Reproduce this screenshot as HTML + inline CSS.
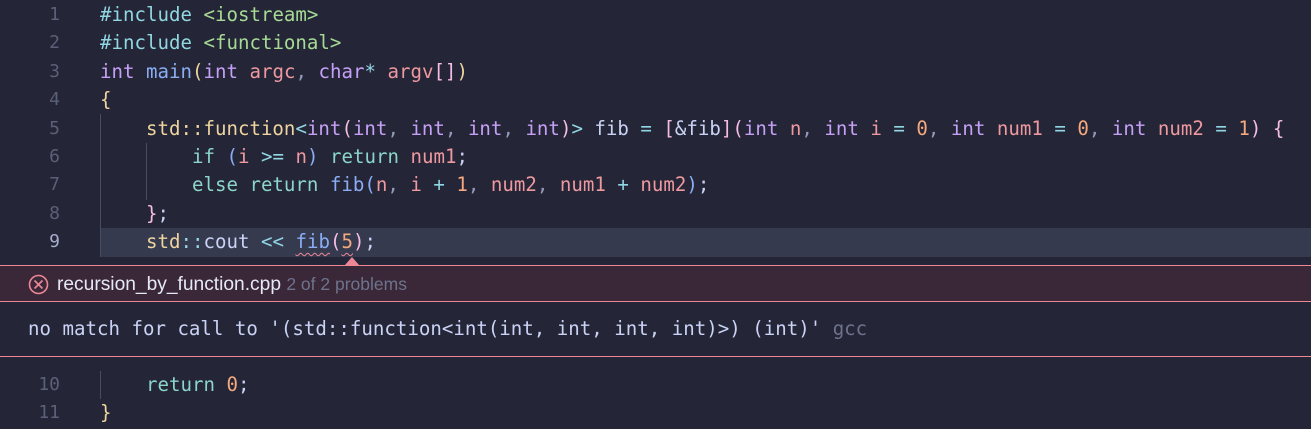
<!DOCTYPE html>
<html><head><meta charset="utf-8"><style>
body{margin:0;width:1311px;height:429px;background:#242536;overflow:hidden;position:relative;font-family:"DejaVu Sans Mono","Liberation Mono",monospace;}
.l{position:absolute;left:0;width:1311px;height:28.4px;line-height:28.4px;font-size:19.1px;white-space:pre;color:#cad3f5}
.n{position:absolute;left:0;width:60px;text-align:right;color:#5b6078;font-size:18px}
.c{position:absolute;left:100px}
.k{color:#c6a0f6}.s{color:#91d7e3}.g{color:#a6da95}.b{color:#8aadf4}.y{color:#eed49f}.m{color:#ee99a0}.p{color:#f5bde6}.o{color:#f5a97f}.w{color:#939ab7}.t{color:#8bd5ca}
.guide{position:absolute;width:1px;background:#494d64}
.sq{text-decoration:underline wavy #ed8796;text-underline-offset:4px;text-decoration-thickness:1px}
</style></head><body>
<div class="l" style="top:1px"><span class="n">1</span><span class="c"><span class="s">#include</span> <span class="g">&lt;iostream&gt;</span></span></div>
<div class="l" style="top:29.4px"><span class="n">2</span><span class="c"><span class="s">#include</span> <span class="g">&lt;functional&gt;</span></span></div>
<div class="l" style="top:57.8px"><span class="n">3</span><span class="c"><span class="k">int</span> <span class="b">main</span><span class="y">(</span><span class="k">int</span> <span class="m">argc</span><span class="w">,</span> <span class="k">char</span><span class="s">*</span> <span class="m">argv</span><span class="p">[]</span><span class="y">)</span></span></div>
<div class="l" style="top:86.2px"><span class="n">4</span><span class="c"><span class="y">{</span></span></div>
<div class="l" style="top:114.6px"><span class="n">5</span><span class="c">    <span class="y">std::function</span><span class="s">&lt;</span><span class="k">int</span><span class="p">(</span><span class="k">int</span><span class="w">,</span> <span class="k">int</span><span class="w">,</span> <span class="k">int</span><span class="w">,</span> <span class="k">int</span><span class="p">)</span><span class="s">&gt;</span> fib <span class="s">=</span> <span class="p">[</span>&amp;fib<span class="p">](</span><span class="k">int</span> <span class="m">n</span><span class="w">,</span> <span class="k">int</span> <span class="m">i</span> <span class="s">=</span> <span class="o">0</span><span class="w">,</span> <span class="k">int</span> <span class="m">num1</span> <span class="s">=</span> <span class="o">0</span><span class="w">,</span> <span class="k">int</span> <span class="m">num2</span> <span class="s">=</span> <span class="o">1</span><span class="p">)</span> <span class="p">{</span></span></div>
<div class="l" style="top:143px"><span class="n">6</span><span class="c">        <span class="t">if</span> <span class="b">(</span><span class="m">i</span> <span class="s">&gt;=</span> <span class="m">n</span><span class="b">)</span> <span class="t">return</span> <span class="m">num1</span>;</span></div>
<div class="l" style="top:171.4px"><span class="n">7</span><span class="c">        <span class="t">else return</span> <span class="b">fib(</span><span class="m">n</span><span class="w">,</span> <span class="m">i</span> <span class="s">+</span> <span class="o">1</span><span class="w">,</span> <span class="m">num2</span><span class="w">,</span> <span class="m">num1</span> <span class="s">+</span> <span class="m">num2</span><span class="b">)</span>;</span></div>
<div class="l" style="top:199.8px"><span class="n">8</span><span class="c">    <span class="p">}</span>;</span></div>
<div style="position:absolute;left:100px;top:228.2px;width:1211px;height:28.4px;background:#363a4f"></div>
<div class="l" style="top:228.2px"><span class="n" style="color:#a5adcb">9</span><span class="c">    <span class="y">std</span><span class="s">::</span>cout <span class="s">&lt;&lt;</span> <span class="b sq">fib</span><span class="p">(</span><span class="o sq">5</span><span class="p">)</span>;</span></div>
<div class="guide" style="left:100px;top:114px;height:143px"></div>
<div class="guide" style="left:146px;top:143px;height:57px"></div>
<div style="position:absolute;left:345px;top:257px;width:0;height:0;border-left:7px solid transparent;border-right:7px solid transparent;border-bottom:8px solid #ed8796"></div>
<div style="position:absolute;left:0;top:265px;width:1311px;height:35px;background:#3a2838;border-top:1px solid #ed8796;border-bottom:1px solid #ed8796"></div>
<svg style="position:absolute;left:28px;top:274px" width="21" height="21" viewBox="0 0 21 21"><circle cx="10.5" cy="10.5" r="9" fill="none" stroke="#ed8796" stroke-width="1.6"/><path d="M6.5 6.5L14.5 14.5M14.5 6.5L6.5 14.5" stroke="#ed8796" stroke-width="1.6"/></svg>
<div style="position:absolute;left:57px;top:272px;font-family:'Liberation Sans',sans-serif;font-size:19.2px;color:#e6e9f5;line-height:24px">recursion_by_function.cpp <span style="color:#6e738d;font-size:17.5px">2 of 2 problems</span></div>
<div style="position:absolute;left:28px;top:315px;font-size:19.1px;color:#cad3f5;white-space:pre;line-height:28px">no match for call to '(std::function&lt;int(int, int, int, int)&gt;) (int)' <span style="color:#6e738d">gcc</span></div>
<div style="position:absolute;left:0;top:356px;width:1311px;height:1px;background:#ed8796"></div>
<div class="l" style="top:371px"><span class="n">10</span><span class="c">    <span class="t">return</span> <span class="o">0</span>;</span></div>
<div class="l" style="top:399.4px"><span class="n">11</span><span class="c"><span class="y">}</span></span></div>
<div class="guide" style="left:100px;top:371px;height:28px"></div>
</body></html>
